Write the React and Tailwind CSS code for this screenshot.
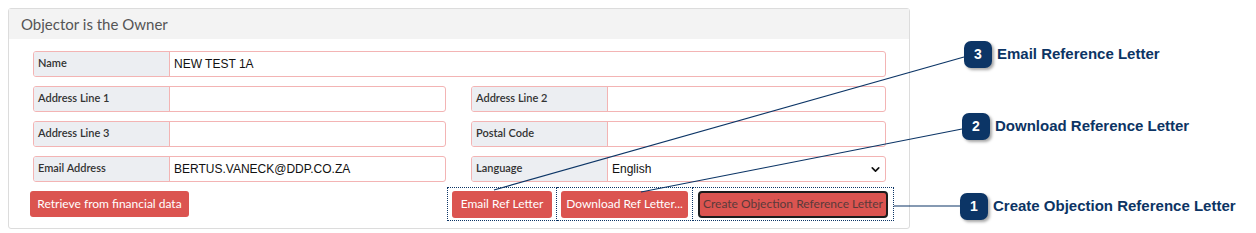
import React from 'react';
import { ChevronDown } from 'lucide-react';

const ui = { fontFamily: 'Lato, "Open Sans", sans-serif' };
const arial = { fontFamily: '"Liberation Sans", Arial, sans-serif' };

const Field = ({ label, value, children }) => (
  <div className="flex h-[26px] border border-[#f3b4b4] rounded-[3px] overflow-hidden bg-white">
    <div className="w-[136px] shrink-0 bg-[#eceef2] border-r border-[#f3b4b4] px-[4px] pt-[3px] text-[11px] font-semibold text-[#333]" style={ui}>
      {label}
    </div>
    <div className="flex-1 flex items-center px-[4px] text-[12px] text-[#111]" style={arial}>
      {value}
      {children}
    </div>
  </div>
);

const Badge = ({ n }) => (
  <div className="w-[28px] h-[27px] rounded-[7px] bg-[#0c3566] text-white text-[14px] font-bold flex items-center justify-center shadow-[2px_2px_3px_rgba(0,0,0,0.35)]" style={arial}>
    {n}
  </div>
);

const Callout = ({ n, text, className }) => (
  <div className={`absolute flex items-center gap-[5px] ${className}`}>
    <Badge n={n} />
    <span className="text-[15px] font-bold text-[#0c3464]" style={arial}>{text}</span>
  </div>
);

const App = () => {
  return (
    <div className="relative w-[1256px] h-[233px] bg-white overflow-hidden">
      <div className="ml-[8px] mt-[8px] w-[902px] h-[221px] border border-[#dcdcdc] rounded-[3px]">
        <div className="h-[30px] bg-[#f3f3f3] px-[12px] flex items-center text-[15px] text-[#555]" style={ui}>
          Objector is the Owner
        </div>
        <div className="pl-[24px] pr-[23px] pt-[12px]">
          <div className="grid grid-cols-[413px_415px] gap-x-[25px] gap-y-[9px]">
            <div className="col-span-2">
              <Field label="Name" value="NEW TEST 1A" />
            </div>
            <Field label="Address Line 1" value="" />
            <Field label="Address Line 2" value="" />
            <Field label="Address Line 3" value="" />
            <Field label="Postal Code" value="" />
            <Field label="Email Address" value="BERTUS.VANECK@DDP.CO.ZA" />
            <Field label="Language" value="English">
              <ChevronDown className="ml-auto mr-[-1px] text-[#111]" size={13} strokeWidth={3} />
            </Field>
          </div>
          <div className="flex items-center mt-[5px] ml-[-3px]">
            <button className="h-[26px] w-[159px] bg-[#db5450] text-white text-[12px] rounded-[3px]" style={ui}>
              Retrieve from financial data
            </button>
            <div className="ml-auto mr-[-8px] flex">
              <div className="border border-dotted border-[#0c3566] px-[4px] py-[2px]">
                <button className="h-[27px] w-[100px] bg-[#db5450] text-white text-[12px] rounded-[3px]" style={ui}>
                  Email Ref Letter
                </button>
              </div>
              <div className="border border-dotted border-[#0c3566] border-l-0 px-[4px] py-[2px]">
                <button className="h-[27px] w-[127px] bg-[#db5450] text-white text-[12px] rounded-[3px]" style={ui}>
                  Download Ref Letter...
                </button>
              </div>
              <div className="border border-dotted border-[#0c3566] border-l-0 pl-[5px] pr-[5px] py-[2px]">
                <button className="h-[27px] w-[190px] bg-[#db5450] text-[#5a3a3a] text-[12px] rounded-[4px] border-2 border-[#1c1c1c]" style={ui}>
                  Create Objection Reference Letter
                </button>
              </div>
            </div>
          </div>
        </div>
      </div>

      <svg className="absolute inset-0 pointer-events-none" width="1256" height="233">
        <line x1="964" y1="57" x2="494" y2="190" stroke="#0c3566" strokeWidth="1.2" />
        <line x1="962" y1="129" x2="641" y2="192" stroke="#0c3566" strokeWidth="1.2" />
        <line x1="894" y1="206" x2="960" y2="206" stroke="#0c3566" strokeWidth="1.2" />
      </svg>

      <Callout n="3" text="Email Reference Letter" className="left-[964px] top-[41px]" />
      <Callout n="2" text="Download Reference Letter" className="left-[962px] top-[113px]" />
      <Callout n="1" text="Create Objection Reference Letter" className="left-[960px] top-[193px]" />
    </div>
  );
};

export default App;
